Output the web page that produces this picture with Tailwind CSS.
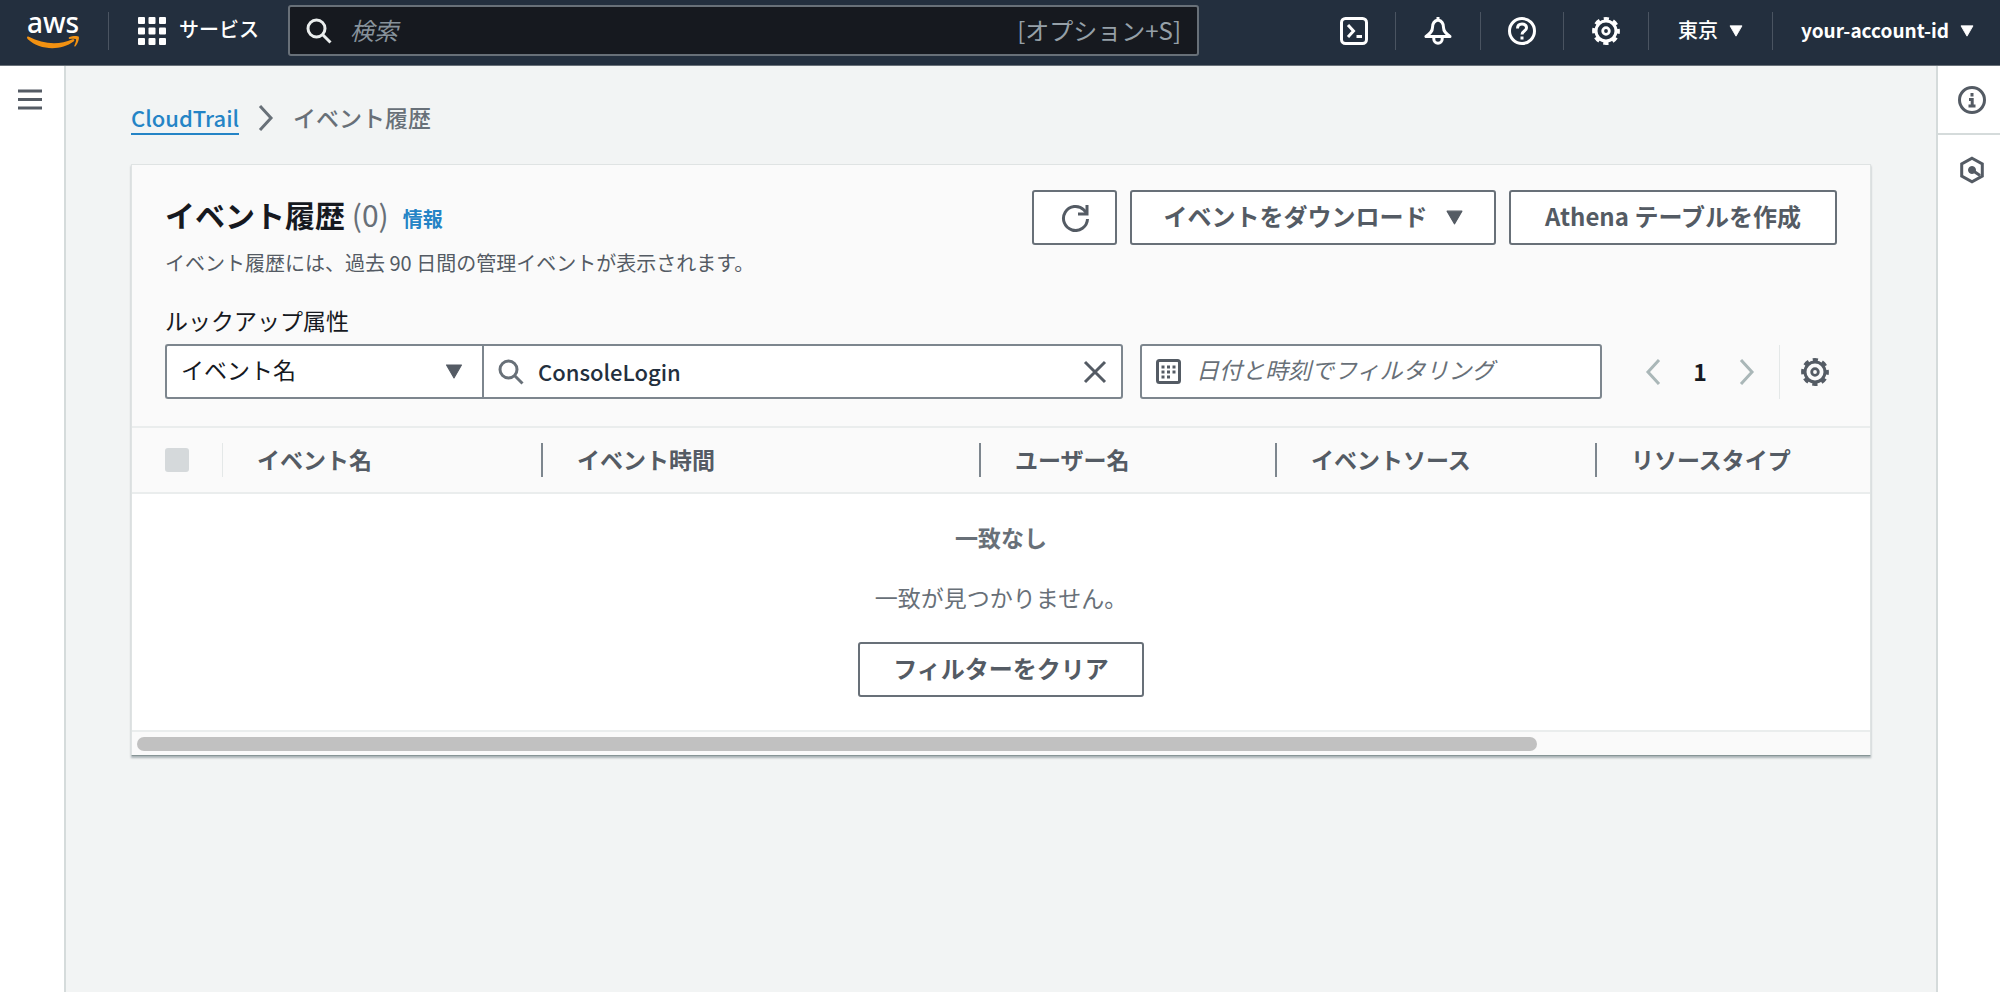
<!DOCTYPE html>
<html lang="ja">
<head>
<meta charset="utf-8">
<meta name="viewport" content="width=device-width, initial-scale=1">
<title>CloudTrail - イベント履歴</title>
<script src="https://cdn.jsdelivr.net/npm/@tailwindcss/browser@4"></script>
</head>
<body class="min-h-screen flex flex-col bg-[#f2f4f4] font-['Noto_Sans_CJK_JP','Noto_Sans',sans-serif] text-[23px] text-[#16191f]">

<svg class="hidden" aria-hidden="true">
  <symbol id="gear" viewBox="0 0 28 28" fill="none" stroke="currentColor">
    <circle cx="14" cy="14" r="10" stroke-width="3"/>
    <circle cx="14" cy="14" r="12.200" stroke-width="3.400" stroke-dasharray="5.200 4.380" stroke-dashoffset="2.600"/>
    <circle cx="14" cy="14" r="3.300" stroke-width="2.800"/>
  </symbol>
  <symbol id="glass" viewBox="0 0 26 26" fill="none" stroke="currentColor" stroke-width="3">
    <circle cx="10.500" cy="10.500" r="8.500"/><path d="M16.500 16.500 24.500 24.500"/>
  </symbol>
  <symbol id="caret" viewBox="0 0 16 14"><path fill="currentColor" stroke="currentColor" stroke-linejoin="round" d="M1 1h14L8 13z"/></symbol>
</svg>

<header class="flex h-[66px] shrink-0 items-center border-b border-[#687078] bg-[#232f3e] pb-1 text-xl text-white">
  <a href="#" aria-label="aws" class="ml-[26px] w-[54px]">
    <span class="block h-[24px] text-center font-['Noto_Sans','Open_Sans',sans-serif] text-[28px] leading-[20px] font-medium">aws</span>
    <svg class="block h-[13px] w-[54px] text-[#f29111]" viewBox="0 0 54 13" fill="currentColor"><path d="M1 1.500c0-1 .8-1.300 1.800-.7C17 8.500 34 9 46 3.500c2-.9 3.300.7 1.500 2C35 15 14 14.500 1.800 3.300 1.200 2.700 1 2 1 1.500z"/><path d="M43 1.300C46 0 51-.4 52.500.6c1.200 1-.2 6.500-3 9.600-.7.700-1.500.3-1.100-.6.8-2 2.200-5.400 1.500-6.300-.7-1-4.300-.6-6.200-.3-1 .1-1.300-1-.7-1.700z"/></svg>
  </a>
  <span class="ml-[28px] h-[38px] w-px bg-[#4a5461]"></span>
  <button class="ml-[29px] flex items-center gap-[13px] font-medium">
    <svg class="size-7" viewBox="0 0 28 28" fill="currentColor"><rect width="7" height="7" rx="1"/><rect x="10.500" width="7" height="7" rx="1"/><rect x="21" width="7" height="7" rx="1"/><rect y="10.500" width="7" height="7" rx="1"/><rect x="10.500" y="10.500" width="7" height="7" rx="1"/><rect x="21" y="10.500" width="7" height="7" rx="1"/><rect y="21" width="7" height="7" rx="1"/><rect x="10.500" y="21" width="7" height="7" rx="1"/><rect x="21" y="21" width="7" height="7" rx="1"/></svg>
    <span class="pb-1">サービス</span>
  </button>
  <label class="ml-[29px] flex h-[51px] w-[911px] items-center rounded-[3px] border-2 border-[#687078] bg-[#16191f] px-[16px] text-2xl text-[#95a0a8]">
    <svg class="size-[26px] shrink-0 text-[#eaeded]"><use href="#glass"/></svg>
    <input type="search" aria-label="検索" placeholder="検索" class="ml-[18px] min-w-0 flex-1 bg-transparent pb-0.5 italic outline-none placeholder:text-[#87929b]">
    <span class="pb-0.5 whitespace-nowrap">[オプション+S]</span>
  </label>
  <nav class="ml-auto flex items-center font-bold">
    <button aria-label="CloudShell" class="mr-[27px]"><svg class="size-7" viewBox="0 0 28 28" fill="none" stroke="currentColor" stroke-width="3"><rect x="1.500" y="1.500" width="25" height="25" rx="4"/><path d="m8 8 5.500 6L8 20M16.500 19.500h5.500"/></svg></button>
    <span class="h-[38px] w-px bg-[#4a5461]"></span>
    <button aria-label="通知" class="mx-7"><svg class="size-7" viewBox="0 0 28 28" fill="none" stroke="currentColor" stroke-width="3" stroke-linejoin="round"><path d="M14 0v3M14 3c-3.600.8-5.500 4-5.500 7.500 0 4-2.500 6-6.500 9h24c-4-3-6.500-5-6.500-9C19.500 7 17.600 3.800 14 3z"/><path d="M9.800 20v2a4.200 4.200 0 0 0 8.400 0v-2"/></svg></button>
    <span class="h-[38px] w-px bg-[#4a5461]"></span>
    <button aria-label="ヘルプ" class="mx-[27px]"><svg class="size-7" viewBox="0 0 28 28" fill="none" stroke="currentColor" stroke-width="3"><circle cx="14" cy="14" r="12.500"/><path d="M9.500 11.500c0-2.800 1.800-4.500 4.500-4.500s4.500 1.500 4.500 4c0 3-4.500 3.200-4.500 6.500M14 19.500v3"/></svg></button>
    <span class="h-[38px] w-px bg-[#4a5461]"></span>
    <button aria-label="設定" class="mx-7"><svg class="size-7"><use href="#gear"/></svg></button>
    <span class="h-[38px] w-px bg-[#4a5461]"></span>
    <button class="mx-[29px] flex items-center gap-[11px] whitespace-nowrap"><span class="pb-0.5 font-medium">東京</span> <svg class="h-3 w-[14px]"><use href="#caret"/></svg></button>
    <span class="h-[38px] w-px bg-[#4a5461]"></span>
    <button class="mr-[26px] ml-7 flex items-center gap-[11px] text-[19px] whitespace-nowrap">your-account-id <svg class="h-3 w-[14px]"><use href="#caret"/></svg></button>
  </nav>
</header>

<div class="flex flex-1">
  <aside class="w-[66px] shrink-0 border-r-2 border-[#d5dbdb] bg-white pt-[22px] pl-[18px]">
    <button aria-label="メニューを開く" class="block text-[#545b64]"><svg class="h-[23px] w-6" viewBox="0 0 24 23" stroke="currentColor" stroke-width="3"><path d="M0 3h24M0 11.500h24M0 20h24"/></svg></button>
  </aside>

  <main class="min-w-0 flex-1 pr-[65px] pl-[65px]">
    <nav aria-label="パンくず" class="mt-[34px] flex h-9 items-center font-medium text-[#687078]">
      <a href="#" class="border-b-2 border-[#2484c6] text-[22px] leading-8 text-[#2484c6]">CloudTrail</a>
      <svg class="mx-[19px] h-[26px] w-4" viewBox="0 0 16 26" fill="none" stroke="currentColor" stroke-width="3"><path d="m2 1 11 12L2 25"/></svg>
      <span class="pb-0.5">イベント履歴</span>
    </nav>

    <section class="mt-[28px] border border-[#dfe3e3] border-b-[#879596] bg-white shadow-[0_2px_2px_0_rgba(0,28,36,0.3)]">
      <div class="bg-[#fafafa] px-[33px] pt-[25px] pb-[27px]">
        <div class="flex items-start justify-between">
          <div>
            <div class="flex h-[48px] items-baseline">
              <h1 class="text-3xl leading-[48px] font-bold">イベント履歴 <span class="font-normal text-[#687078]">(0)</span></h1>
              <a href="#" class="ml-[14px] text-xl font-bold text-[#2484c6]">情報</a>
            </div>
            <p class="mt-[10px] text-xl leading-[30px] text-[#545b64]">イベント履歴には、過去 90 日間の管理イベントが表示されます。</p>
          </div>
          <div class="flex gap-[13px] text-2xl font-bold text-[#545b64]">
            <button aria-label="更新" class="flex h-[55px] w-[85px] items-center justify-center rounded-[3px] border-2 border-[#687078] bg-white"><svg class="size-7" viewBox="0 0 28 28" fill="none" stroke="currentColor" stroke-width="3"><path d="M26.500 15A12 12 0 1 1 23 6l2.500 3"/><path d="M26 1v9h-9"/></svg></button>
            <button class="flex h-[55px] w-[366px] items-center justify-center gap-[18px] rounded-[3px] border-2 border-[#687078] bg-white"><span class="pb-1">イベントをダウンロード</span> <svg class="h-[15px] w-[17px]"><use href="#caret"/></svg></button>
            <button class="h-[55px] w-[328px] rounded-[3px] border-2 border-[#687078] bg-white pb-1">Athena テーブルを作成</button>
          </div>
        </div>
        <div class="mt-6 leading-9"><label for="attr">ルックアップ属性</label></div>
        <div class="mt-[6px] flex items-center">
          <div class="relative h-[55px] w-[317px]">
            <select id="attr" class="h-full w-full appearance-none rounded-l-[3px] border-2 border-r-0 border-[#7d868e] bg-white pb-1 pl-[14px] outline-none"><option>イベント名</option></select>
            <svg class="pointer-events-none absolute top-[20px] right-[19px] h-[15px] w-[18px] text-[#545b64]"><use href="#caret"/></svg>
          </div>
          <div class="flex h-[55px] min-w-0 flex-1 items-center rounded-r-[3px] border-2 border-[#7d868e] bg-white px-[14px]">
            <svg class="size-[26px] shrink-0 text-[#687078]"><use href="#glass"/></svg>
            <input type="text" aria-label="検索値" value="ConsoleLogin" class="ml-[14px] min-w-0 flex-1 bg-transparent text-[22px] font-medium text-[#232f3e] outline-none">
            <button aria-label="クリア" class="text-[#545b64]"><svg class="size-6" viewBox="0 0 24 24" fill="none" stroke="currentColor" stroke-width="3"><path d="m2 2 20 20M22 2 2 22"/></svg></button>
          </div>
          <label class="ml-[17px] flex h-[55px] w-[462px] items-center rounded-[3px] border-2 border-[#7d868e] bg-white pl-[14px]">
            <svg class="size-[25px] shrink-0 text-[#545b64]" viewBox="0 0 25 25" fill="none" stroke="currentColor"><rect x="1.500" y="1.500" width="22" height="22" rx="2" stroke-width="3"/><path stroke-width="3" stroke-dasharray="3 2.500" d="M5.500 8H20M5.500 13H20M5.500 18H14"/></svg>
            <input type="text" aria-label="日付と時刻" placeholder="日付と時刻でフィルタリング" class="ml-[15px] min-w-0 flex-1 bg-transparent pb-1 italic outline-none placeholder:text-[#687078]">
          </label>
          <div class="ml-[43px] flex items-center text-[#aab7b8]">
            <button aria-label="前のページ"><svg class="h-[26px] w-4" viewBox="0 0 16 26" fill="none" stroke="currentColor" stroke-width="3"><path d="M14 1 3 13l11 12"/></svg></button>
            <button class="w-[78px] text-center font-bold text-[#16191f]">1</button>
            <button aria-label="次のページ"><svg class="h-[26px] w-4" viewBox="0 0 16 26" fill="none" stroke="currentColor" stroke-width="3"><path d="m2 1 11 12L2 25"/></svg></button>
            <span class="ml-6 h-[54px] w-px bg-[#e4e8e8]"></span>
            <button aria-label="設定" class="mr-2 ml-[21px] text-[#545b64]"><svg class="size-7"><use href="#gear"/></svg></button>
          </div>
        </div>
      </div>
      <div class="overflow-hidden">
        <table class="w-full table-fixed border-collapse">
          <thead>
            <tr class="h-[66px] border-y-2 border-[#eaeded] bg-[#fafafa] text-left text-[#545b64]">
              <th class="w-[91px] p-0 pl-[33px]"><div class="flex h-[34px] items-center border-r border-[#e4e8e8]"><input type="checkbox" disabled aria-label="すべて選択" class="size-6 appearance-none rounded-[3px] bg-[#d5d9db]"></div></th>
              <th class="w-[320px] p-0"><div class="flex h-[34px] items-center border-r-2 border-[#7d868e] pb-0.5 pl-[34px]">イベント名</div></th>
              <th class="w-[438px] p-0"><div class="flex h-[34px] items-center border-r-2 border-[#7d868e] pb-0.5 pl-[34px]">イベント時間</div></th>
              <th class="w-[296px] p-0"><div class="flex h-[34px] items-center border-r-2 border-[#7d868e] pb-0.5 pl-[34px]">ユーザー名</div></th>
              <th class="w-[320px] p-0"><div class="flex h-[34px] items-center border-r-2 border-[#7d868e] pb-0.5 pl-[34px]">イベントソース</div></th>
              <th class="p-0"><div class="flex h-[34px] items-center pb-0.5 pl-[34px]">リソースタイプ</div></th>
            </tr>
          </thead>
          <tbody>
            <tr><td colspan="6" class="p-0 pt-[25px] pb-[33px] text-center leading-9 text-[#687078]">
              <p class="font-bold">一致なし</p>
              <p class="mt-6">一致が見つかりません。</p>
              <button class="mt-[27px] h-[55px] w-[286px] rounded-[3px] border-2 border-[#687078] pb-1 text-2xl font-bold text-[#545b64]">フィルターをクリア</button>
            </td></tr>
          </tbody>
        </table>
      </div>
      <div class="h-[25px] border-t-2 border-[#eaeded] bg-[#fafafa] px-[5px] pt-[5px]"><div class="h-[14px] w-[81%] rounded-full bg-[#c1c1c1]"></div></div>
    </section>
  </main>

  <aside class="w-[64px] shrink-0 border-l-2 border-[#d5dbdb] bg-white text-[#545b64]">
    <button aria-label="情報" class="flex h-[69px] w-full items-center justify-center border-b-2 border-[#d5dbdb] pl-[5px]"><svg class="size-7" viewBox="0 0 28 28" fill="none" stroke="currentColor" stroke-width="3"><circle cx="14" cy="14" r="12.500"/><path d="M14 7v3.500M11 13.500h3.200V20M10.500 20h7"/></svg></button>
    <button aria-label="チュートリアル" class="flex h-[69px] w-full items-center justify-center pl-[5px]"><svg class="size-7" viewBox="0 0 28 28" fill="none" stroke="currentColor" stroke-width="3"><path d="M14 2.200 24.300 8v12L14 25.800 3.700 20V8z"/><path d="m14 14 8 5.500"/><circle cx="14" cy="14" r="3.500" fill="currentColor" stroke-width="1"/></svg></button>
  </aside>
</div>
</body>
</html>
